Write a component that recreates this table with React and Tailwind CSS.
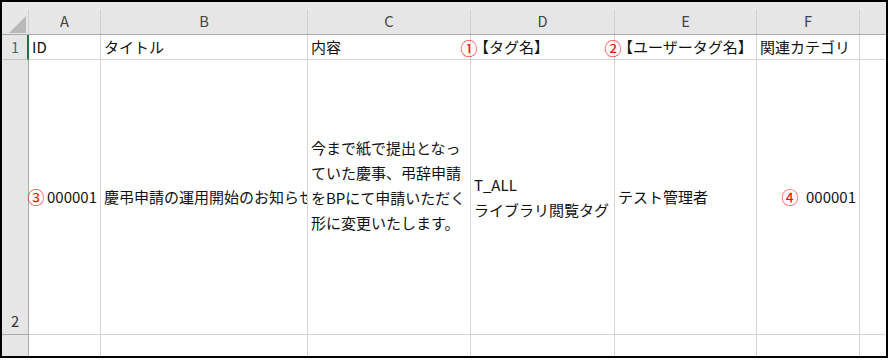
import React from 'react';

// column letters with their widths (right grid line included)
const columns = [
  { key: 'A', w: 'w-[72px]' },
  { key: 'B', w: 'w-[207px]' },
  { key: 'C', w: 'w-[163px]' },
  { key: 'D', w: 'w-[144px]' },
  { key: 'E', w: 'w-[142px]' },
  { key: 'F', w: 'w-[103px]' },
];

const cell = 'flex-none border-r border-b border-[#d4d4d4] overflow-hidden whitespace-nowrap';

const Mark = ({ children, className }) => (
  <span
    className={`absolute leading-none text-[17px] text-[#ff0000] -translate-x-1/2 -translate-y-1/2 ${className}`}
  >
    {children}
  </span>
);

const App = () => {
  return (
    <div className="w-[895px] h-[362px] bg-white">
      <div className="relative w-[888px] h-[358px] border-2 border-black bg-white flex flex-col overflow-hidden font-['Noto_Sans_CJK_JP',sans-serif] text-[15px] text-[#111]">
        {/* column headers */}
        <div className="flex items-end h-[33px] flex-none bg-[#e6e6e6] border-b border-[#ababab] text-[14.67px]">
          <div className="flex-none w-[27px] h-[24px] border-r border-[#d0d0d0] flex items-end justify-end pr-[2px] pb-[1px]">
            <svg width="17" height="17" viewBox="0 0 17 17">
              <polygon points="17,0 17,17 0,17" fill="#b9b9b9" />
            </svg>
          </div>
          {columns.map((c) => (
            <div
              key={c.key}
              className={`flex-none ${c.w} h-[24px] border-r border-[#d0d0d0] flex items-center justify-center pb-[3px] text-[#444]`}
            >
              {c.key}
            </div>
          ))}
          <div className="flex-1" />
        </div>

        {/* row 1 */}
        <div className="flex h-[25px] flex-none">
          <div className="flex-none w-[27px] bg-[#e6e6e6] border-r-2 border-r-[#217346] border-b border-b-[#c4c4c4] flex items-center justify-center pl-[1px] text-[14.67px] text-[#4a6e5a]">
            1
          </div>
          <div className={`${cell} w-[72px] px-[3px] flex items-center`}>ID</div>
          <div className={`${cell} w-[207px] px-[3px] flex items-center`}>タイトル</div>
          <div className={`${cell} w-[163px] px-[3px] flex items-center`}>内容</div>
          <div className={`${cell} w-[144px] px-[3px] flex items-center`}>【タグ名】</div>
          <div className={`${cell} w-[142px] px-[3px] flex items-center`}>【ユーザータグ名】</div>
          <div className={`${cell} w-[103px] px-[3px] flex items-center`}>関連カテゴリ</div>
          <div className="flex-1 border-b border-[#d4d4d4]" />
        </div>

        {/* row 2 */}
        <div className="flex h-[275px] flex-none">
          <div className="flex-none w-[27px] bg-[#e6e6e6] border-r border-[#ababab] border-b border-b-[#ababab] flex items-end justify-center pb-[2px] text-[14.67px] text-[#333]">
            2
          </div>
          <div className={`${cell} w-[72px] px-[3px] flex items-center justify-end`}>000001</div>
          <div className={`${cell} w-[207px] px-[3px] flex items-center`}>慶弔申請の運用開始のお知らせ</div>
          {/* wrapped text ends with a blank line */}
          <div className={`${cell} w-[163px] px-[3px] pb-[25px] flex flex-col justify-center leading-[25px]`}>
            <span>今まで紙で提出となっ</span>
            <span>ていた慶事、弔辞申請</span>
            <span>をBPにて申請いただく</span>
            <span>形に変更いたします。</span>
          </div>
          <div className={`${cell} w-[144px] px-[3px] flex flex-col justify-center leading-[25px]`}>
            <span>T_ALL</span>
            <span>ライブラリ閲覧タグ</span>
          </div>
          <div className={`${cell} w-[142px] px-[3px] flex items-center`}>テスト管理者</div>
          <div className={`${cell} w-[103px] px-[3px] flex items-center justify-end`}>000001</div>
          <div className="flex-1 border-b border-[#d4d4d4]" />
        </div>

        {/* row 3 (cut off) */}
        <div className="flex flex-1">
          <div className="flex-none w-[27px] bg-[#e6e6e6] border-r border-[#ababab]" />
          {columns.map((c) => (
            <div key={c.key} className={`flex-none ${c.w} border-r border-[#d4d4d4]`} />
          ))}
          <div className="flex-1" />
        </div>

        {/* numbered callouts */}
        <Mark className="left-[467px] top-[45px]">①</Mark>
        <Mark className="left-[611px] top-[45px]">②</Mark>
        <Mark className="left-[34px] top-[194px]">③</Mark>
        <Mark className="left-[788px] top-[194px]">④</Mark>
      </div>
    </div>
  );
};

export default App;
